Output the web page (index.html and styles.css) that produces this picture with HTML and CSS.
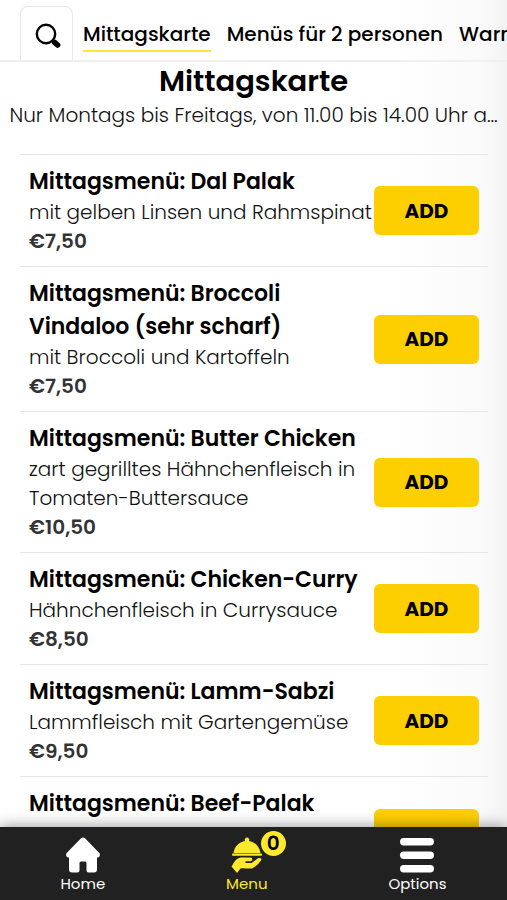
FILE: index.html
```html
<!DOCTYPE html>
<html lang="de">
<head>
<meta charset="utf-8">
<meta name="viewport" content="width=device-width, initial-scale=1">
<title>Mittagskarte</title>
<link rel="stylesheet" href="styles.css">
</head>
<body>
<header class="topbar">
  <button class="search" type="button" aria-label="Suche">
    <svg viewBox="0 0 26 26" width="26" height="26" aria-hidden="true">
      <circle cx="11" cy="11" r="9.2" fill="none" stroke="#000" stroke-width="2.4"/>
      <path d="M17.5 17.5l1.5 1.5" stroke="#000" stroke-width="2.6"/>
      <path d="M19.6 19.4l3 2.6" stroke="#000" stroke-width="5.6" stroke-linecap="round"/>
    </svg>
  </button>
  <nav class="tabs">
    <a class="tab tab-active" href="#mittag">Mittagskarte</a>
    <a class="tab" href="#menus">Menüs für 2 personen</a>
    <a class="tab" href="#warm">Warme Vorspeisen</a>
  </nav>
</header>
<main class="content" id="mittag">
  <h1 class="heading">Mittagskarte</h1>
  <p class="note">Nur Montags bis Freitags, von 11.00 bis 14.00 Uhr a…</p>
  <ul class="list">
    <li class="item">
      <div class="info"><h2 class="name">Mittagsmenü: Dal Palak</h2><p class="desc">mit gelben Linsen und Rahmspinat</p><p class="price">€7,50</p></div>
      <button class="add" type="button">ADD</button>
    </li>
    <li class="item">
      <div class="info"><h2 class="name">Mittagsmenü: Broccoli Vindaloo (sehr scharf)</h2><p class="desc">mit Broccoli und Kartoffeln</p><p class="price">€7,50</p></div>
      <button class="add" type="button">ADD</button>
    </li>
    <li class="item">
      <div class="info"><h2 class="name">Mittagsmenü: Butter Chicken</h2><p class="desc">zart gegrilltes Hähnchenfleisch in Tomaten-Buttersauce</p><p class="price">€10,50</p></div>
      <button class="add" type="button">ADD</button>
    </li>
    <li class="item">
      <div class="info"><h2 class="name">Mittagsmenü: Chicken-Curry</h2><p class="desc">Hähnchenfleisch in Currysauce</p><p class="price">€8,50</p></div>
      <button class="add" type="button">ADD</button>
    </li>
    <li class="item">
      <div class="info"><h2 class="name">Mittagsmenü: Lamm-Sabzi</h2><p class="desc">Lammfleisch mit Gartengemüse</p><p class="price">€9,50</p></div>
      <button class="add" type="button">ADD</button>
    </li>
    <li class="item item-last">
      <div class="info"><h2 class="name">Mittagsmenü: Beef-Palak</h2></div>
      <button class="add" type="button">ADD</button>
    </li>
  </ul>
</main>
<nav class="bottom">
  <a class="link" href="#home">
    <svg viewBox="0 0 36 36" width="36" height="36" aria-hidden="true">
      <path fill="#fff" d="M16 1.3q2-1.6 4 0L34.300 16q1.500 2-.5 4.200L32 20.500V32.500Q32 35.500 29 35.500H23.500Q21.500 35.500 21.500 33.500V26Q21.500 24.500 20 24.500H16Q14.500 24.500 14.500 26V33.500Q14.500 35.500 12.500 35.500H7Q4 35.500 4 32.500V20.500L2.200 20.200Q.2 18 1.700 16Z"/>
    </svg>
    <span>Home</span>
  </a>
  <a class="link link-active" href="#menu">
    <span class="dish">
      <svg viewBox="0 0 36 36" width="36" height="36" aria-hidden="true">
        <g fill="#ffe92e">
          <path d="M4.500 16C5.500 9.500 10 5 16 4A2.300 2.300 0 1 1 20 4C26 5 30.500 9.500 31.500 16Z"/>
          <rect x="3" y="16.500" width="30" height="2.300" rx="1"/>
          <path d="M3.500 28C7 21.500 10 20.500 13 20.500H21Q23.500 20.700 23.300 22.700Q23 24 21.500 24.200H16.500V26H22.500L29 21.300Q32.500 20 32.500 22.800Q29 28.500 23 31.500C17 32 14 30.500 11.500 31.500L8 36L2.500 29.500Z"/>
        </g>
      </svg>
      <span class="badge">0</span>
    </span>
    <span>Menu</span>
  </a>
  <a class="link" href="#options">
    <svg viewBox="0 0 36 36" width="36" height="36" aria-hidden="true">
      <g fill="#fff"><rect x="1" y="1" width="34" height="7.500" rx="3.700"/><rect x="1" y="14.500" width="34" height="7.500" rx="3.700"/><rect x="1" y="28" width="34" height="7.500" rx="3.700"/></g>
    </svg>
    <span>Options</span>
  </a>
</nav>
</body>
</html>
```
FILE: styles.css
```css
* { box-sizing: border-box; }
h1, h2, p, ul { margin: 0; padding: 0; }
body {
  margin: 0;
  height: 100vh;
  display: flex;
  flex-direction: column;
  overflow: hidden;
  font-family: Poppins, Inter, "Noto Sans", sans-serif;
  color: #000;
  background: linear-gradient(to right, #fff 78%, #fafafa 95%, #f3f3f3 100%);
}
a { color: inherit; text-decoration: none; }
button { font-family: inherit; color: inherit; cursor: pointer; }
.topbar {
  flex: none;
  display: flex;
  align-items: flex-end;
  gap: 10px;
  height: 62px;
  padding-left: 20px;
  border-bottom: 2px solid #f0f0f0;
  overflow: hidden;
}
.search {
  flex: none;
  display: grid;
  place-items: center;
  width: 53px;
  height: 54px;
  padding: 4px 0 0 2px;
  border: 1px solid #e8e8e8;
  border-bottom: 0;
  border-radius: 8px 8px 0 0;
  background: #fff;
}
.tabs { display: flex; gap: 16px; padding-bottom: 8px; }
.tab {
  border-bottom: 2px solid transparent;
  font-size: 20px;
  font-weight: 500;
  line-height: 32px;
  white-space: nowrap;
}
.tab-active { border-color: #fbe73b; }
.content { flex: 1; min-height: 0; overflow: hidden; }
.heading {
  font-size: 29px;
  font-weight: 600;
  line-height: 38px;
  text-align: center;
}
.note {
  margin-bottom: 24px;
  color: #111;
  font-size: 20px;
  font-weight: 300;
  line-height: 30px;
  text-align: center;
  white-space: nowrap;
}
.list { margin: 0 19px 0 20px; list-style: none; }
.item {
  display: flex;
  align-items: center;
  justify-content: space-between;
  padding: 10px 9px;
  border-top: 1px solid #e6e6e6;
}
.info { flex: 1; min-width: 0; }
.item-last { align-items: flex-start; }
.item-last .add { margin-top: 22px; }
.name { font-size: 22px; font-weight: 600; line-height: 33px; }
.desc { color: #111; font-size: 20px; font-weight: 300; line-height: 29px; }
.price { color: #333; font-size: 20px; font-weight: 600; line-height: 29px; }
.add {
  flex: none;
  width: 105px;
  height: 49px;
  padding: 0;
  border: 0;
  border-radius: 6px;
  background: #fecf00;
  font-size: 20px;
  font-weight: 700;
}
.bottom {
  position: relative;
  flex: none;
  display: flex;
  justify-content: space-around;
  height: 73px;
  padding-top: 10px;
  background: #212121;
  color: #fff;
  box-shadow: 0 0 14px rgba(0, 0, 0, .45);
}
.link {
  display: flex;
  flex-direction: column;
  align-items: center;
  font-size: 15px;
  line-height: 22px;
}
.link svg { display: block; }
.link-active { color: #ffe92e; }
.dish { position: relative; }
.badge {
  position: absolute;
  top: -6px;
  left: 32px;
  width: 25px;
  height: 25px;
  border-radius: 50%;
  background: #ffe92e;
  color: #000;
  font-size: 20px;
  font-weight: 600;
  line-height: 25px;
  text-align: center;
}
```
